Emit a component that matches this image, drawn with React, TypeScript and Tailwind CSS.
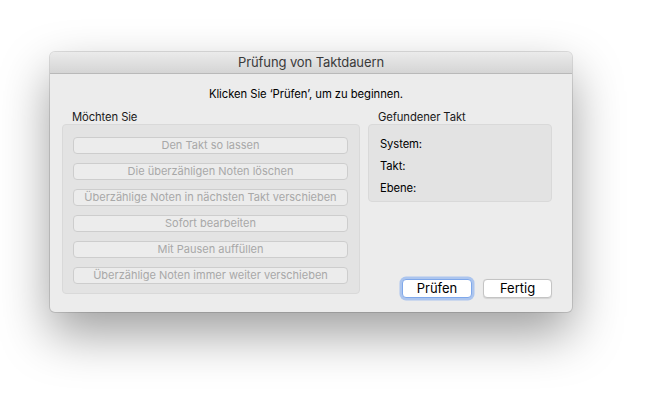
const options = [
  "Den Takt so lassen",
  "Die überzähligen Noten löschen",
  "Überzählige Noten in nächsten Takt verschieben",
  "Sofort bearbeiten",
  "Mit Pausen auffüllen",
  "Überzählige Noten immer weiter verschieben",
];

const found = ["System:", "Takt:", "Ebene:"];

export default function App() {
  return (
    <div
      className="w-[650px] h-[409px] bg-white pt-[52px] pl-[50px] overflow-hidden"
      style={{ fontFamily: "Inter, 'Noto Sans', sans-serif" }}
    >
      <div className="w-[522px] h-[260px] bg-[#ececec] rounded-[5px] shadow-[0_22px_50px_rgba(0,0,0,0.38),0_0_0_1px_rgba(0,0,0,0.12)] flex flex-col overflow-hidden">
        {/* title bar */}
        <div className="h-[22px] shrink-0 bg-gradient-to-b from-[#ebebeb] to-[#d5d5d5] border-b border-[#b9b9b9] flex items-center justify-center">
          <span className="text-[13px] text-[#3a3a3a] tracking-[-0.1px]">Prüfung von Taktdauern</span>
        </div>

        <div className="flex-1 flex flex-col pl-3 pr-5">
          <div className="h-[20px] mt-[10px] flex items-center justify-center pr-[2px]">
            <span className="text-[11.25px] text-black tracking-[-0.05px]">Klicken Sie ‘Prüfen’, um zu beginnen.</span>
          </div>

          <div className="flex-1 flex gap-2 mt-[6px]">
            {/* left group */}
            <div className="w-[298px] flex flex-col">
              <div className="h-[14px] pl-[10px] flex items-center text-[11.25px] text-[#1a1a1a] tracking-[-0.1px]">
                Möchten Sie
              </div>
              <div className="h-[170px] bg-[#e3e3e3] border border-[#d9d9d9] rounded-[4px] pt-[12px] pl-[10px] pr-[11px] flex flex-col gap-[9px]">
                {options.map((o) => (
                  <div
                    key={o}
                    className="h-[17px] bg-[#ececec] border border-[#cdcdcd] rounded-[4px] flex items-center justify-center text-[11px] text-[#a8a8a8] tracking-[0px]"
                  >
                    {o}
                  </div>
                ))}
              </div>
            </div>

            {/* right group */}
            <div className="w-[184px] flex flex-col pb-[14px]">
              <div className="h-[14px] pl-[10px] flex items-center text-[11.25px] text-[#1a1a1a] tracking-[-0.1px]">
                Gefundener Takt
              </div>
              <div className="h-[78px] bg-[#e3e3e3] border border-[#d9d9d9] rounded-[4px] pt-[12px] pl-[11px] flex flex-col gap-[8px]">
                {found.map((f) => (
                  <div key={f} className="h-[14px] flex items-center text-[11.25px] text-black tracking-[-0.1px]">
                    {f}
                  </div>
                ))}
              </div>
              <div className="flex-1" />
              <div className="flex justify-end gap-[11px]">
                <div className="w-[70px] h-[19px] bg-white rounded-[4px] border border-[#7fa8ea] shadow-[0_0_0_2.5px_rgba(120,165,240,0.55)] flex items-center justify-center text-[13px] text-black">
                  Prüfen
                </div>
                <div className="w-[69px] h-[19px] bg-white rounded-[4px] border border-[#c4c4c4] shadow-[0_0.5px_1px_rgba(0,0,0,0.1)] flex items-center justify-center text-[13px] text-black">
                  Fertig
                </div>
              </div>
            </div>
          </div>
        </div>
      </div>
    </div>
  );
}
